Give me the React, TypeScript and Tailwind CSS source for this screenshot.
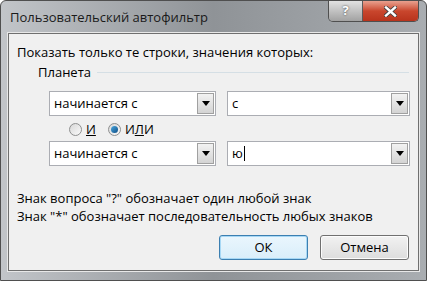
import React from 'react'

const font = { fontFamily: '"Open Sans", "Noto Sans", sans-serif' }

function Combo({ value, width, caret }: { value: string; width: string; caret?: boolean }) {
  return (
    <div className={`flex h-[25px] ${width} border border-[#abadb3] bg-white`}>
      <div className="flex flex-1 items-center pl-[4px] text-[13px] text-black">
        {value}
        {caret && <span className="ml-[1px] inline-block h-[15px] w-px bg-black" />}
      </div>
      <div className="m-px flex w-[17px] items-center justify-center border border-[#a0a0a0] bg-gradient-to-b from-[#f2f2f2] to-[#d4d4d4]">
        <svg width="8" height="5" viewBox="0 0 8 5">
          <path d="M0 0h8L4 5z" fill="#000" />
        </svg>
      </div>
    </div>
  )
}

function Radio({ checked, label }: { checked?: boolean; label: React.ReactNode }) {
  return (
    <div className="flex items-center gap-[4px] text-[13px] leading-[16px] text-black">
      <div className="flex h-[13px] w-[13px] items-center justify-center rounded-full border border-[#8e8f8f] bg-gradient-to-br from-[#d8d8d8] to-[#fafafa]">
        {checked && <div className="h-[7px] w-[7px] rounded-full bg-gradient-to-br from-[#4aa8e0] to-[#0f4f86]" />}
      </div>
      <span>{label}</span>
    </div>
  )
}

export default function App() {
  return (
    <div
      className="flex h-[281px] w-[427px] flex-col overflow-hidden rounded-t-[6px] border border-[#4f4f4f] bg-gradient-to-r from-[#c2c5c9] via-[#8f9397] to-[#a9adb1]"
      style={font}
    >
      <div className="flex h-[32px] shrink-0 items-start justify-between">
        <div className="pl-[9px] pt-[7px] text-[13px] text-[#1a1a1a]">Пользовательский автофильтр</div>
        <div className="mr-[7px] flex h-[21px] overflow-hidden rounded-b-[5px] border border-t-0 border-[#4f4f4f]">
          <div className="flex w-[34px] items-center justify-center border-r border-[#5b5b5b] bg-gradient-to-b from-[#e2e2e2] to-[#a2a2a2] text-[13px] font-bold text-white [text-shadow:0_0_2px_#333]">
            ?
          </div>
          <div className="flex w-[55px] items-center justify-center bg-gradient-to-b from-[#e8a08f] via-[#c9462d] to-[#b8331c]">
            <svg width="13" height="11" viewBox="0 0 13 11">
              <path d="M2 1.5l9 8M11 1.5l-9 8" stroke="#404040" strokeWidth="4" strokeLinecap="square" />
              <path d="M2 1.5l9 8M11 1.5l-9 8" stroke="#fff" strokeWidth="2.4" strokeLinecap="square" />
            </svg>
          </div>
        </div>
      </div>
      <div className="mx-[7px] mb-[9px] flex flex-1 flex-col border border-[#6f6f6f] bg-[#f0f0f0] shadow-[0_0_0_1px_#e8e8e8]">
        <div className="pl-[8px] pt-[9px] text-[13px] leading-[18px] text-black">
          Показать только те строки, значения которых:
        </div>
        <div className="mt-[2px] flex items-center pl-[29px] pr-[9px]">
          <span className="text-[13px] leading-[18px] text-black">Планета</span>
          <div className="ml-[6px] h-px flex-1 bg-[#d5dfe5]" />
        </div>
        <div className="mt-[10px] flex gap-[11px] pl-[40px]">
          <Combo value="начинается с" width="w-[167px]" />
          <Combo value="с" width="w-[183px]" />
        </div>
        <div className="mt-[5px] flex gap-[12px] pl-[60px]">
          <Radio label={<><u>И</u></>} />
          <Radio checked label={<>И<u>Л</u>И</>} />
        </div>
        <div className="mt-[4px] flex gap-[11px] pl-[40px]">
          <Combo value="начинается с" width="w-[167px]" />
          <Combo value="ю" width="w-[183px]" caret />
        </div>
        <div className="mt-[23px] pl-[8px] text-[13px] leading-[18px] text-black">
          <div>Знак вопроса "?" обозначает один любой знак</div>
          <div>Знак "*" обозначает последовательность любых знаков</div>
        </div>
        <div className="mt-[10px] flex justify-end gap-[12px] pr-[9px]">
          <div className="flex h-[25px] w-[89px] items-center justify-center rounded-[3px] border border-[#3c7fb1] bg-gradient-to-b from-[#eaf6fd] to-[#d9eefa] text-[13px] text-black shadow-[inset_0_0_0_1px_#a7d8f5]">
            ОК
          </div>
          <div className="flex h-[25px] w-[89px] items-center justify-center rounded-[3px] border border-[#707070] bg-gradient-to-b from-[#f2f2f2] to-[#dddddd] text-[13px] text-black shadow-[inset_0_0_0_1px_#fcfcfc]">
            Отмена
          </div>
        </div>
      </div>
    </div>
  )
}
